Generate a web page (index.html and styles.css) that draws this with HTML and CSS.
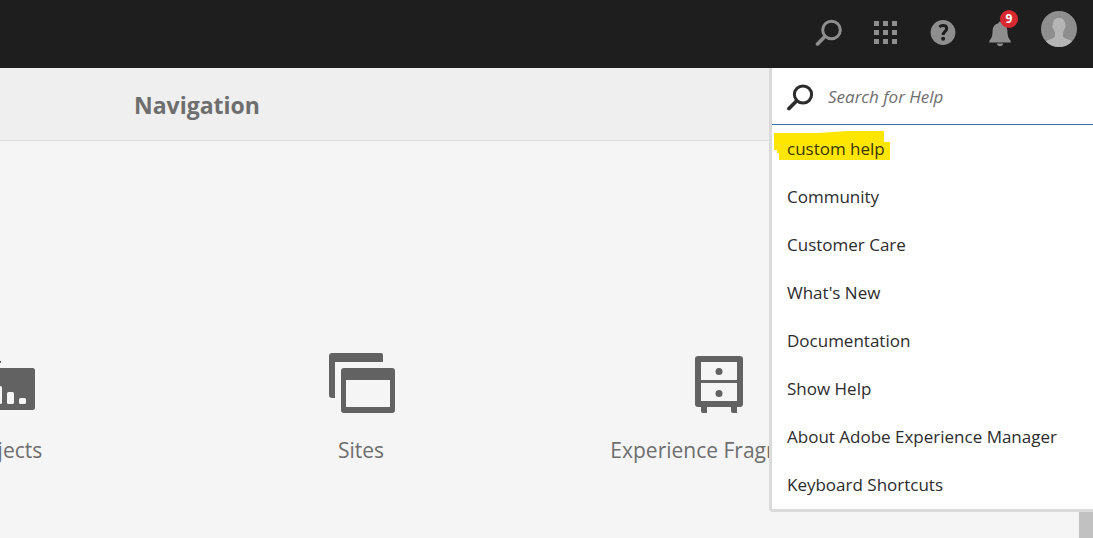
FILE: index.html
```html
<!DOCTYPE html>
<html lang="en">
<head>
<meta charset="utf-8">
<title>Navigation</title>
<link rel="stylesheet" href="styles.css">
</head>
<body>
<header class="shell-header">
  <button class="header-action" aria-label="Search">
    <svg width="28" height="28" viewBox="0 0 28 28" fill="none" stroke="currentColor"><circle cx="16.500" cy="11" r="8.800" stroke-width="3"/><path d="M10 17.500 2.500 25" stroke-width="3.600" stroke-linecap="round"/></svg>
  </button>
  <button class="header-action" aria-label="Solutions">
    <svg width="28" height="28" viewBox="0 0 28 28" fill="currentColor"><path d="M2 2h5v5H2zM11 2h5v5h-5zM20 2h5v5h-5zM2 11h5v5H2zM11 11h5v5h-5zM20 11h5v5h-5zM2 20h5v5H2zM11 20h5v5h-5zM20 20h5v5h-5z"/></svg>
  </button>
  <button class="header-action" aria-label="Help">
    <svg width="28" height="28" viewBox="0 0 28 28"><circle cx="14" cy="13.500" r="12.400" fill="currentColor"/><path d="M10.400 8c1-1 2.200-1.400 3.600-1.400 2.200 0 3.700 1.100 3.700 2.900 0 2.900-3.500 3-3.500 6.500" fill="none" stroke="#1e1e1e" stroke-width="3"/><circle cx="14.100" cy="19.700" r="2" fill="#1e1e1e"/></svg>
  </button>
  <button class="header-action" aria-label="Notifications">
    <svg width="28" height="28" viewBox="0 0 28 28" fill="currentColor"><path d="M14 2.500c1 0 1.500.7 1.500 1.800 4 .9 5.700 3.700 5.900 7.700.3 5.500 1 7.500 3.300 9.700V23.500H3.300v-1.800c2.300-2.200 3-4.200 3.300-9.700.2-4 1.900-6.800 5.900-7.700 0-1.100.5-1.800 1.500-1.800zM10.800 24.500h6.400c-.4 1.700-1.600 2.800-3.200 2.800s-2.800-1.100-3.200-2.800z"/></svg>
    <span class="badge">9</span>
  </button>
  <button class="header-action avatar" aria-label="Profile">
    <svg width="36" height="36" viewBox="0 0 36 36"><clipPath id="disc"><circle cx="18" cy="18" r="18"/></clipPath><circle cx="18" cy="18" r="18" fill="#8e8e8e"/><path clip-path="url(#disc)" fill="#b5b5b5" d="M18 7c4.200 0 6.300 2.800 6.200 7 .8.300.6 2.700-.6 3.600-.3 1.600-.9 2.900-1.600 3.800v3.200c0 2.300 2.500 3 5 3.800 2.500.8 4 1.600 5 3.600v5H4v-5c1-2 2.500-2.800 5-3.600 2.500-.8 5-1.500 5-3.800v-3.200c-.7-.9-1.300-2.200-1.600-3.800-1.200-.9-1.400-3.300-.6-3.600C11.700 9.800 13.800 7 18 7z"/></svg>
  </button>
</header>
<main class="content">
  <h1 class="title">Navigation</h1>
  <nav class="cards">
    <a class="card" href="#">
      <svg width="72" height="72" viewBox="0 0 72 72"><path d="M20 12h10l4 1v2H18z" fill="#626262"/><rect x="0" y="20" width="68" height="42" rx="2.500" fill="#626262"/><g fill="#f5f5f5"><rect x="16" y="32" width="7" height="24" rx="1.500"/><rect x="28" y="38" width="7" height="18" rx="1.500"/><rect x="40" y="44" width="7" height="12" rx="1.500"/><rect x="52" y="50" width="7" height="6" rx="1.500"/></g></svg>
      <span>Projects</span>
    </a>
    <a class="card" href="#">
      <svg width="72" height="72" viewBox="0 0 72 72" fill="#626262"><path d="M7 5h49a2 2 0 0 1 2 2v7H10v36H7a3 3 0 0 1-3-3V8a3 3 0 0 1 3-3z"/><path fill-rule="evenodd" d="M19 20h48a3 3 0 0 1 3 3v39a3 3 0 0 1-3 3H19a3 3 0 0 1-3-3V23a3 3 0 0 1 3-3zM21 32v27h44V32z"/></svg>
      <span>Sites</span>
    </a>
    <a class="card" href="#">
      <svg width="72" height="72" viewBox="0 0 72 72" fill="#626262"><path fill-rule="evenodd" d="M15 8h42a3 3 0 0 1 3 3v45a3 3 0 0 1-3 3H15a3 3 0 0 1-3-3V11a3 3 0 0 1 3-3zM18 14v18h36V14zM18 35v18h36V35z"/><circle cx="36" cy="23.500" r="3.500"/><circle cx="36" cy="45.500" r="3.500"/><path d="M18 58h6v7h-4a2 2 0 0 1-2-2zM48 58h6v7h-4a2 2 0 0 1-2-2z"/></svg>
      <span>Experience Fragments</span>
    </a>
  </nav>
  <div class="scroll-thumb"></div>
  <section class="help-panel" aria-label="Help">
    <label class="help-search">
      <svg width="28" height="28" viewBox="0 0 28 28" fill="none" stroke="#2c2c2c"><circle cx="17" cy="11.500" r="8.600" stroke-width="3"/><path d="M10.500 18 3 25.500" stroke-width="3.800" stroke-linecap="round"/></svg>
      <input class="help-input" type="text" placeholder="Search for Help" aria-label="Search for Help">
    </label>
    <ul class="help-list">
      <li><a class="help-link marked" href="#"><svg class="marker" width="118" height="34" viewBox="0 0 118 34"><path fill="#ffe600" d="M1 3h44l30-2h36v11h6v18H6v-7H4v-3H1z"/></svg><span class="marked-text">custom help</span></a></li>
      <li><a class="help-link" href="#">Community</a></li>
      <li><a class="help-link" href="#">Customer Care</a></li>
      <li><a class="help-link" href="#">What's New</a></li>
      <li><a class="help-link" href="#">Documentation</a></li>
      <li><a class="help-link" href="#">Show Help</a></li>
      <li><a class="help-link" href="#">About Adobe Experience Manager</a></li>
      <li><a class="help-link" href="#">Keyboard Shortcuts</a></li>
    </ul>
  </section>
</main>
</body>
</html>
```
FILE: styles.css
```css
* { box-sizing: border-box; }
body {
  margin: 0;
  min-height: 100vh;
  display: flex;
  flex-direction: column;
  overflow: hidden;
  background: #f5f5f5;
  font-family: "Open Sans", "Noto Sans", sans-serif;
}
.shell-header {
  display: flex;
  justify-content: flex-end;
  align-items: center;
  gap: 29px;
  height: 68px;
  padding: 0 16px 2px;
  background: #1e1e1e;
}
.header-action {
  position: relative;
  display: flex;
  padding: 0;
  border: 0;
  background: none;
  color: #8e8e8e;
}
.avatar {
  margin-left: -2px;
  padding-bottom: 8px;
}
.badge {
  position: absolute;
  top: -9px;
  right: -4px;
  width: 18px;
  border-radius: 9px;
  background: #d7292f;
  color: #fff;
  font: 700 12px/18px "Open Sans", sans-serif;
  text-align: center;
}
.content {
  position: relative;
  flex: 1;
}
.title {
  margin: 0;
  padding: 2px 134px 0;
  border-bottom: 1px solid #dedede;
  background: #efefef;
  color: #6e6e6e;
  font-size: 23px;
  font-weight: 700;
  line-height: 70px;
}
.cards {
  display: grid;
  grid-template-columns: repeat(3, 358px);
  margin-left: -176px;
  padding-top: 207px;
}
.card {
  display: flex;
  flex-direction: column;
  align-items: center;
  gap: 16px;
  color: #6e6e6e;
  font-size: 21px;
  line-height: 28px;
  text-decoration: none;
}
.scroll-thumb {
  position: absolute;
  top: 0;
  right: 0;
  bottom: 0;
  width: 14px;
  background: #c1c1c1;
}
.help-panel {
  position: absolute;
  top: 0;
  right: 0;
  width: 324px;
  border: solid #dadada;
  border-width: 0 0 3px 3px;
  border-radius: 0 0 0 4px;
  background: #fff;
}
.help-search {
  display: flex;
  align-items: center;
  gap: 14px;
  height: 57px;
  padding: 2px 0 0 14px;
  border-bottom: 1px solid #3a6ea5;
}
.help-input {
  flex: 1;
  min-width: 0;
  padding: 0;
  border: 0;
  outline: 0;
  background: none;
  font: italic 17px/26px "Open Sans", sans-serif;
}
.help-input::placeholder { color: #6e6e6e; opacity: 1; }
.help-list {
  margin: 0;
  padding: 0;
  list-style: none;
}
.help-link {
  position: relative;
  display: block;
  padding: 0 15px;
  color: #2c2c2c;
  font-size: 17px;
  line-height: 48px;
  text-decoration: none;
}
.marker {
  position: absolute;
  top: 5px;
  left: 1px;
}
.marked-text {
  position: relative;
  color: #3a3608;
}
```
